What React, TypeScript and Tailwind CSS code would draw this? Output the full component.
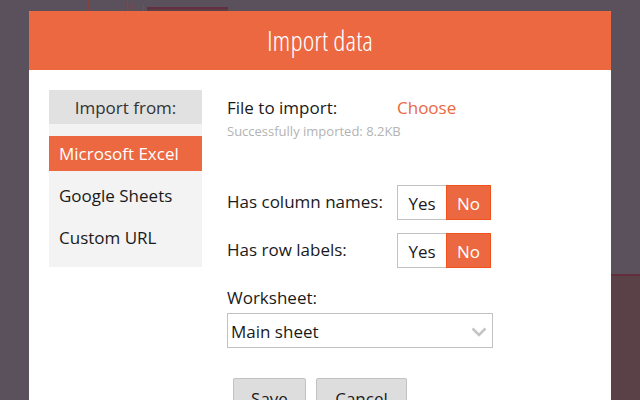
import { useState } from "react";

const SOURCES = ["Microsoft Excel", "Google Sheets", "Custom URL"];

function ChartBackdrop() {
  return (
    <div aria-hidden="true" className="absolute inset-0 overflow-hidden bg-[#5a515c]">
      <svg className="block h-full w-full">
        <rect x="88" y="0" width="1" height="100%" fill="#85413f" />
        <text x="124" y="11" fontSize="13" fill="#8c3f48" className="font-['Open_Sans_Condensed_Light','Open_Sans_Condensed',sans-serif] font-light">
          16
        </text>
        <rect x="143" y="4" width="1" height="12" fill="#62565f" />
        <rect x="147" y="7" width="81" height="80" fill="#5a3f48" />
        <rect x="147" y="7" width="81" height="2" fill="#632f3d" />
        <rect x="540" y="274" width="200" height="100%" fill="#5a4148" />
        <rect x="540" y="274" width="200" height="2" fill="#632f3d" />
      </svg>
    </div>
  );
}

function YesNo({ name, label }: { name: string; label: string }) {
  const [value, setValue] = useState("No");
  return (
    <fieldset className="flex items-center" aria-labelledby={name + "-label"}>
      <span id={name + "-label"} className="w-[170px] shrink-0 pb-0.5">
        {label}
      </span>
      <div className="flex h-[35px]">
        <label
          className={
            "relative flex w-[49px] cursor-pointer items-center justify-center border border-r-0 pt-0.5 " +
            (value === "Yes" ? "border-[#f1511b] bg-[#eb6841] text-white" : "border-[#c2c2c2] bg-white")
          }
        >
          <input type="radio" name={name} className="sr-only" checked={value === "Yes"} onChange={() => setValue("Yes")} />
          Yes
        </label>
        <label
          className={
            "relative flex w-[45px] cursor-pointer items-center justify-center border pt-0.5 " +
            (value === "No" ? "border-[#f1511b] bg-[#eb6841] text-white" : "border-[#c2c2c2] bg-white")
          }
        >
          <input type="radio" name={name} className="sr-only" checked={value === "No"} onChange={() => setValue("No")} />
          No
        </label>
      </div>
    </fieldset>
  );
}

export default function App() {
  const [source, setSource] = useState(SOURCES[0]);
  return (
    <div className="relative h-screen overflow-hidden font-['Open_Sans','Noto_Sans',sans-serif] text-[17px] leading-6 text-[#1a1a1a]">
      <ChartBackdrop />
      <div role="dialog" aria-labelledby="dialog-title" className="relative mx-[29px] mt-[11px] overflow-hidden rounded-t-[1px] bg-white">
        <header className="flex h-[59px] items-center justify-center bg-[#eb6841] pb-0.5 text-white">
          <h1 id="dialog-title" className="font-['Open_Sans_Condensed_Light','Open_Sans_Condensed','Liberation_Sans_Narrow',sans-serif] text-[28px] leading-9 font-light">
            Import data
          </h1>
        </header>
        <div className="flex items-start gap-[25px] p-5">
          <nav aria-label="Import source" className="w-[153px] shrink-0 bg-[#f3f3f3] pb-3">
            <h2 className="mb-3 flex h-[34px] items-center justify-center bg-[#e1e1e1] pt-0.5 text-[#333]">Import from:</h2>
            <ul className="flex flex-col gap-[7px]">
              {SOURCES.map((item) => (
                <li key={item}>
                  <button
                    type="button"
                    onClick={() => setSource(item)}
                    className={
                      "flex h-[35px] w-full items-center px-2.5 text-left whitespace-nowrap " +
                      (item === source ? "bg-[#eb6841] text-white" : "")
                    }
                  >
                    {item}
                  </button>
                </li>
              ))}
            </ul>
          </nav>
          <form className="min-w-0 flex-1 pt-1.5" onSubmit={(e) => e.preventDefault()}>
            <div className="flex">
              <span className="w-[170px] shrink-0">File to import:</span>
              <a href="#choose" className="text-[#eb6841]">
                Choose
              </a>
            </div>
            <p className="text-[13px] leading-[22px] text-[#b3b3b3]">Successfully imported: 8.2KB</p>
            <div className="mt-[43px] flex flex-col gap-[13px]">
              <YesNo name="columns" label="Has column names:" />
              <YesNo name="rows" label="Has row labels:" />
            </div>
            <label htmlFor="worksheet" className="mt-[18px] block">
              Worksheet:
            </label>
            <div className="mt-[3px] grid w-[266px] items-center">
              <select id="worksheet" className="col-start-1 row-start-1 h-[35px] w-full appearance-none rounded-none border border-[#c2c2c2] bg-white pt-0.5 pr-8 pl-[3px]">
                <option>Main sheet</option>
              </select>
              <svg aria-hidden="true" viewBox="0 0 16 10" className="pointer-events-none col-start-1 row-start-1 mt-0.5 mr-1.5 h-2.5 w-4 justify-self-end" fill="none" stroke="#c4c4c4" strokeWidth="2.5">
                <path d="M1.5 1.5 8 8l6.500-6.500" />
              </svg>
            </div>
            <div className="mt-[30px] flex gap-2.5 pl-1.5">
              <button type="submit" className="h-[41px] w-[73px] rounded-xs border border-[#c2c2c2] bg-[#dddddd]">
                Save
              </button>
              <button type="button" className="h-[41px] w-[91px] rounded-xs border border-[#c2c2c2] bg-[#dddddd]">
                Cancel
              </button>
            </div>
          </form>
        </div>
      </div>
    </div>
  );
}
